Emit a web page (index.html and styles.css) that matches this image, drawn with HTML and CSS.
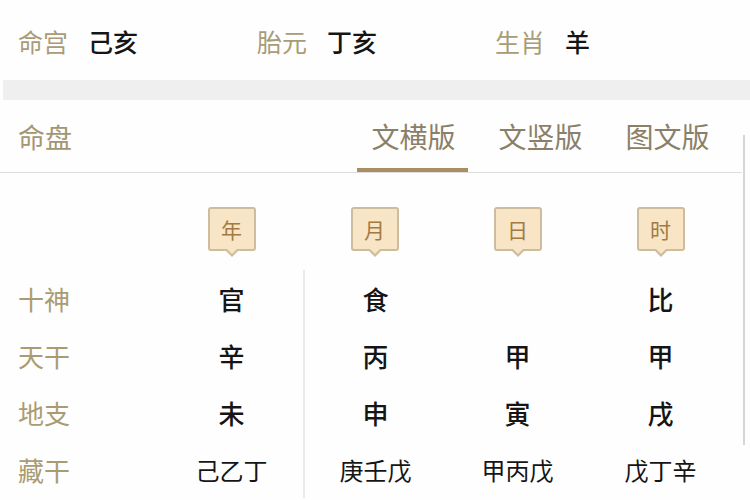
FILE: index.html
```html
<!DOCTYPE html>
<html lang="zh">
<head>
<meta charset="utf-8">
<link rel="stylesheet" href="styles.css">
</head>
<body>
<div class="info">
  <div class="info-item"><span class="lbl">命宫</span><span class="val">己亥</span></div>
  <div class="info-item"><span class="lbl">胎元</span><span class="val">丁亥</span></div>
  <div class="info-item"><span class="lbl">生肖</span><span class="val">羊</span></div>
</div>
<div class="band"></div>
<div class="panel">
  <div class="tabs-row">
    <span class="title">命盘</span>
    <div class="tabs">
      <span class="tab active">文横版</span>
      <span class="tab">文竖版</span>
      <span class="tab">图文版</span>
    </div>
  </div>
  <div class="chart">
    <div class="head-cell"></div>
    <div class="head-cell"><span class="badge">年</span></div>
    <div class="head-cell"><span class="badge">月</span></div>
    <div class="head-cell"><span class="badge">日</span></div>
    <div class="head-cell"><span class="badge">时</span></div>

    <div class="rlabel">十神</div>
    <div class="cell">官</div>
    <div class="cell sep">食</div>
    <div class="cell"></div>
    <div class="cell">比</div>

    <div class="rlabel">天干</div>
    <div class="cell">辛</div>
    <div class="cell sep">丙</div>
    <div class="cell">甲</div>
    <div class="cell">甲</div>

    <div class="rlabel">地支</div>
    <div class="cell">未</div>
    <div class="cell sep">申</div>
    <div class="cell">寅</div>
    <div class="cell">戌</div>

    <div class="rlabel">藏干</div>
    <div class="cell small">己乙丁</div>
    <div class="cell small sep">庚壬戊</div>
    <div class="cell small">甲丙戊</div>
    <div class="cell small">戊丁辛</div>
  </div>
</div>
</body>
</html>
```
FILE: styles.css
```css
* { box-sizing: border-box; }
html, body { margin: 0; padding: 0; background: #fefefe; }
body {
  width: 750px;
  height: 500px;
  overflow: hidden;
  font-family: "Noto Sans CJK SC", "Noto Sans", sans-serif;
}
.info {
  height: 80px;
  display: grid;
  grid-template-columns: 239px 238px 1fr;
  align-items: center;
  padding-left: 18px;
  padding-top: 2px;
}
.info-item { display: flex; align-items: center; gap: 20px; }
.lbl { font-size: 25px; color: #a89c78; }
.val { font-size: 25px; color: #151515; font-weight: 500; }
.band { height: 20px; background: #efefef; margin-left: 3px; }
.panel { position: relative; }
.panel::after {
  content: "";
  position: absolute;
  left: 743px;
  top: 35px;
  height: 310px;
  width: 2px;
  background: #d6d6d6;
}
.tabs-row {
  height: 73px;
  display: flex;
  align-items: center;
  padding: 0 19px 0 18px;
  border-bottom: 1px solid #dedede;
  margin-right: 8px;
}
.title { font-size: 27px; color: #a39672; }
.tabs { margin-left: auto; display: flex; height: 100%; margin-right: -8px; }
.tab {
  position: relative;
  width: 127px;
  display: flex;
  align-items: center;
  justify-content: center;
  font-size: 28px;
  color: #8a8068;
}
.tab.active::after {
  content: "";
  position: absolute;
  left: 7px;
  right: 9px;
  bottom: 0;
  height: 4px;
  background: #a98d63;
}
.chart {
  display: grid;
  grid-template-columns: 160px repeat(4, 143px);
  grid-auto-rows: 57px;
  grid-template-rows: 97px;
}
.head-cell {
  display: flex;
  justify-content: center;
  align-items: flex-start;
  padding-top: 34px;
}
.badge {
  position: relative;
  width: 48px;
  height: 44px;
  display: flex;
  align-items: center;
  justify-content: center;
  background: #f8e5c6;
  border: 2px solid #cdbc9d;
  border-radius: 3px;
  font-size: 21px;
  color: #a27a44;
}
.badge::before {
  content: "";
  position: absolute;
  left: 50%;
  bottom: -8px;
  margin-left: -7px;
  border-left: 7px solid transparent;
  border-right: 7px solid transparent;
  border-top: 7px solid #cdbc9d;
}
.badge::after {
  content: "";
  position: absolute;
  left: 50%;
  bottom: -5px;
  margin-left: -5px;
  border-left: 5px solid transparent;
  border-right: 5px solid transparent;
  border-top: 5px solid #f8e5c6;
}
.rlabel {
  display: flex;
  align-items: center;
  padding-left: 18px;
  font-size: 26px;
  color: #aa9c72;
}
.cell {
  display: flex;
  align-items: center;
  justify-content: center;
  font-size: 26px;
  font-weight: 500;
  color: #151515;
}
.cell.small { font-size: 24px; font-weight: 400; }
.cell.sep { border-left: 2px solid #ebebeb; }
```
